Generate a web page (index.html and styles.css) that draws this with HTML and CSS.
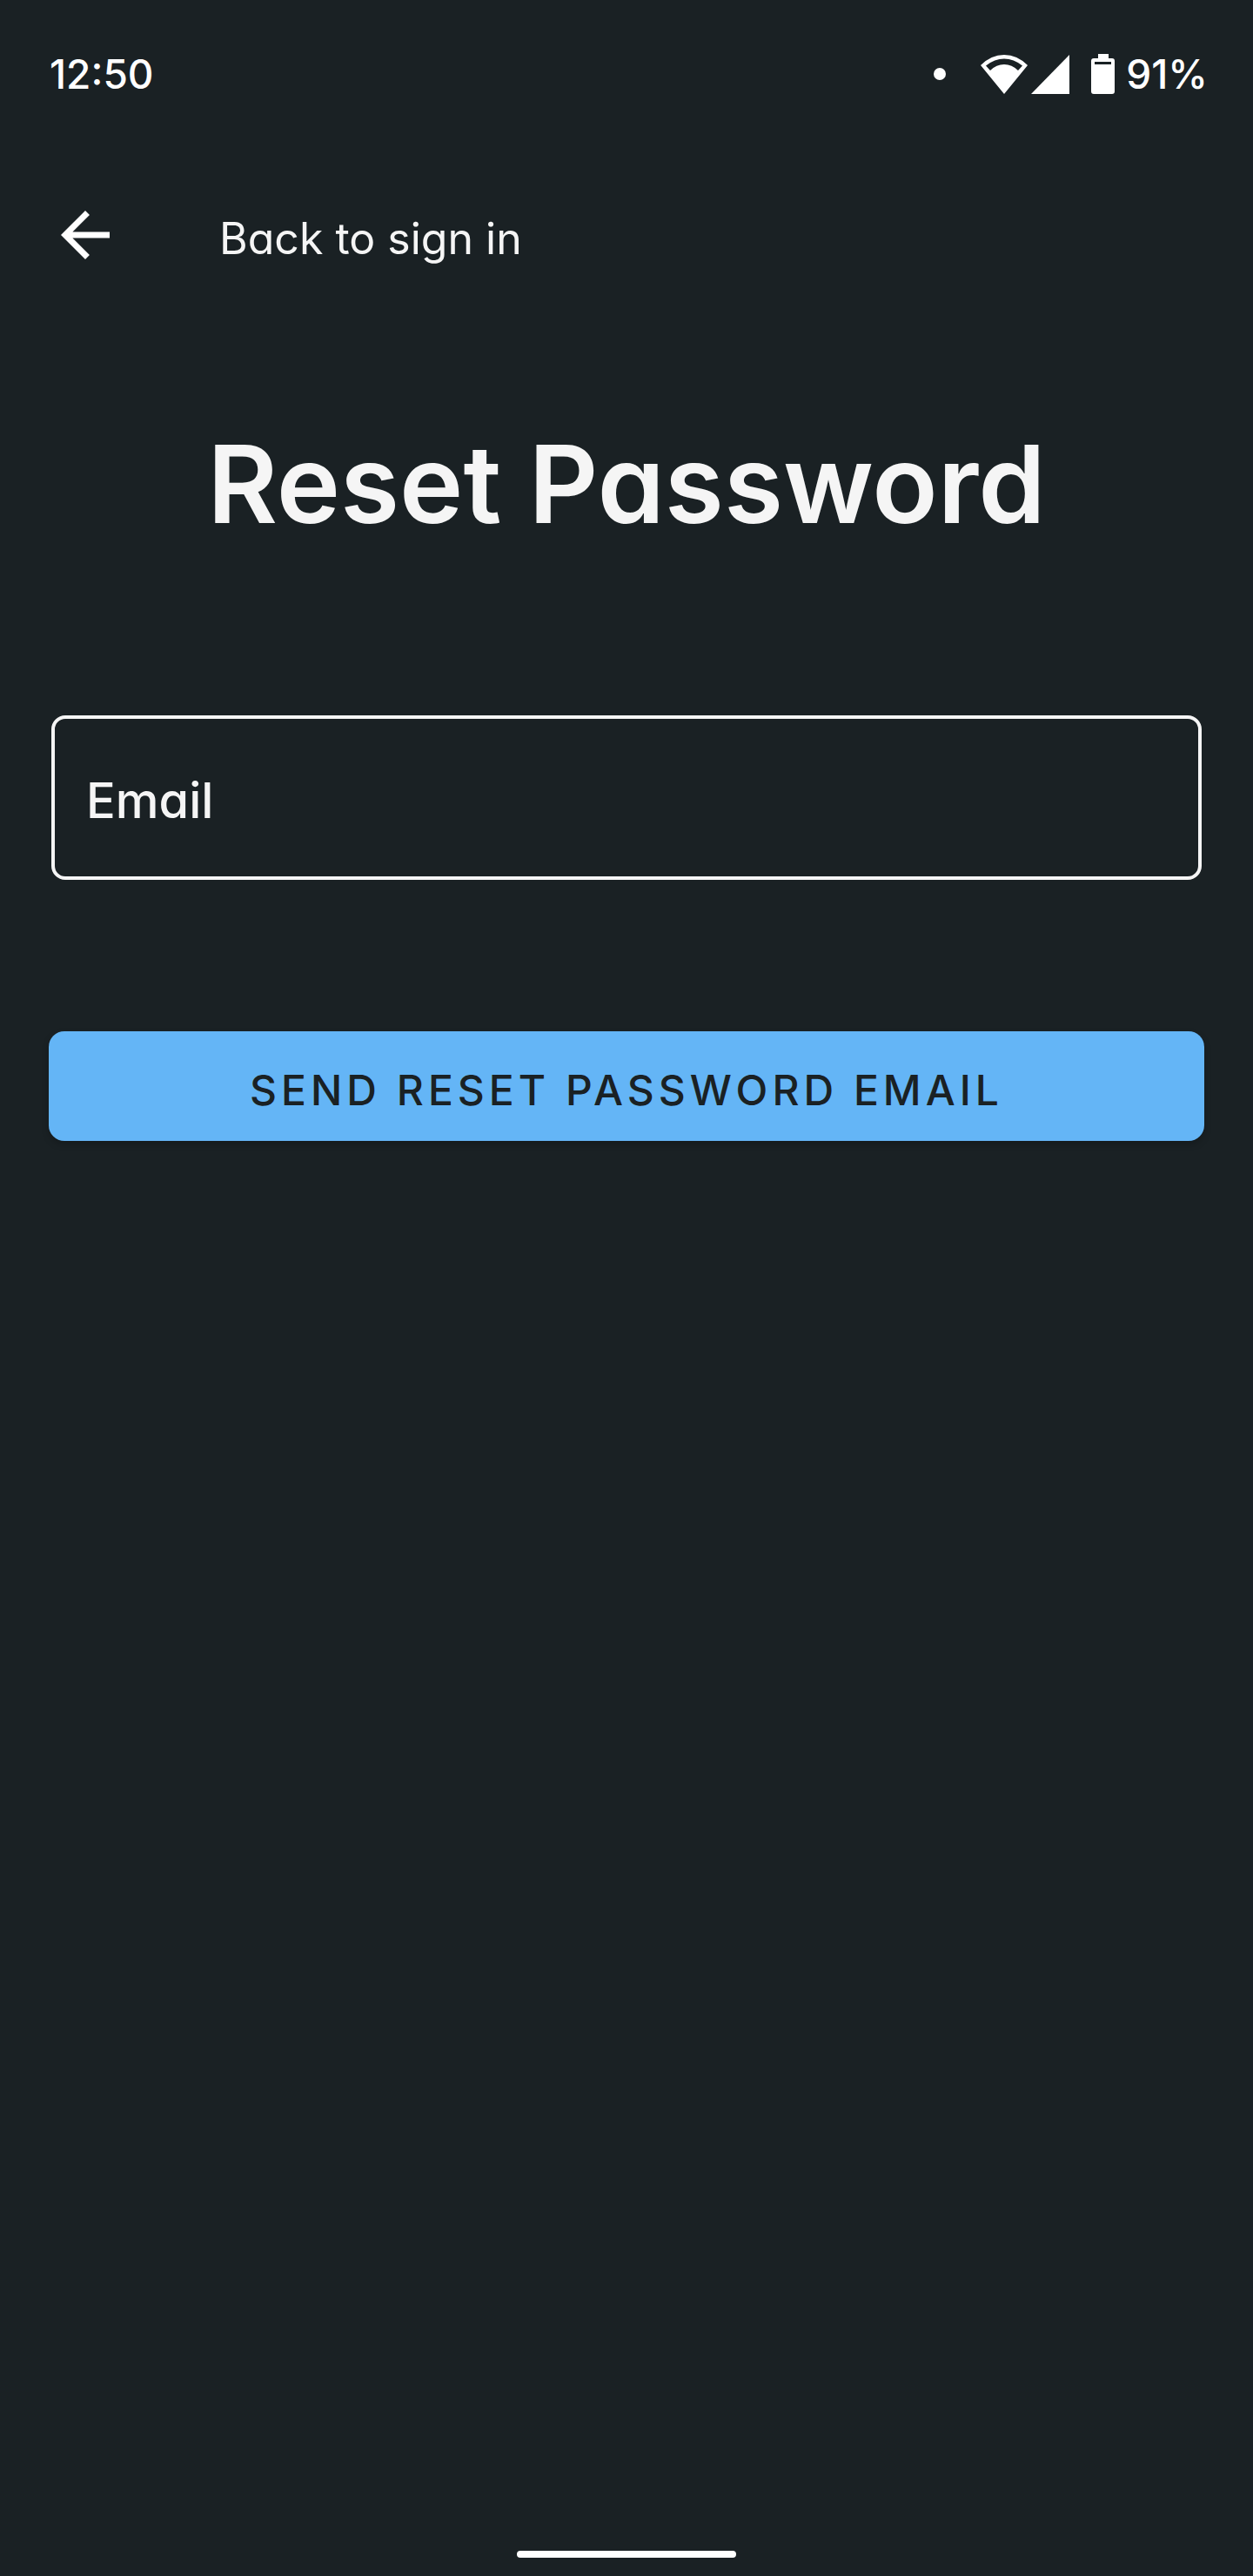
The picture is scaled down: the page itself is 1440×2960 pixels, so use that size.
FILE: index.html
```html
<!DOCTYPE html>
<html lang="en">
<head>
<meta charset="utf-8">
<meta name="viewport" content="width=device-width, initial-scale=1">
<title>Reset Password</title>
<link rel="stylesheet" href="styles.css">
</head>
<body>
<div class="status-bar">
  <span class="status-text">12:50</span>
  <div class="status-icons">
    <span class="status-dot"></span>
    <svg class="wifi" width="54" height="46" viewBox="0 0 54 46" aria-hidden="true">
      <path fill="#fff" fill-rule="evenodd" d="M0 13Q12 1 27 1T54 13L27 46ZM6 13.500L11 19Q18 12 27 12T43 19L48 13.500Q38 5.500 27 5.500T6 13.500Z"/>
    </svg>
    <svg class="signal" width="44" height="46" viewBox="0 0 44 46" aria-hidden="true">
      <path fill="#fff" d="M44 1V46H0Z"/>
    </svg>
    <svg class="battery" width="27" height="46" viewBox="0 0 27 46" aria-hidden="true">
      <path fill="#fff" fill-rule="evenodd" d="M8 0H20V5H24Q27 5 27 8V43Q27 46 24 46H3Q0 46 0 43V8Q0 5 3 5H8ZM4 9V12H23V9Z"/>
    </svg>
    <span class="status-text">91%</span>
  </div>
</div>
<header class="app-bar">
  <a class="back-link" href="#sign-in">
    <svg class="back-arrow" width="84" height="84" viewBox="0 0 24 24" aria-hidden="true">
      <path fill="#fff" d="M20 11H7.830l5.590-5.590L12 4l-8 8 8 8 1.410-1.410L7.830 13H20v-2z"/>
    </svg>
    <span>Back to sign in</span>
  </a>
</header>
<main class="content">
  <h1 class="title">Reset Password</h1>
  <form class="reset-form">
    <div class="field">
      <label class="field-label" for="email">Email</label>
      <input class="field-input" id="email" type="email" name="email">
    </div>
    <button class="submit" type="submit">SEND RESET PASSWORD EMAIL</button>
  </form>
</main>
<footer class="gesture-area"><span class="gesture-bar"></span></footer>
</body>
</html>
```

FILE: styles.css
```css
* {
  box-sizing: border-box;
}

body {
  margin: 0;
  min-height: 100vh;
  display: flex;
  flex-direction: column;
  background: #1a2124;
  color: #f5f5f5;
  font-family: Inter, "Open Sans", sans-serif;
  font-feature-settings: "cv11";
  font-size: 48px;
  font-weight: 500;
  line-height: 56px;
}

.status-bar {
  display: flex;
  align-items: center;
  justify-content: space-between;
  padding: 57px 52px 59px 57px;
  color: #fff;
}

.status-text {
  font-size: 46px;
}

.status-icons {
  display: flex;
  align-items: center;
}

.status-dot {
  width: 14px;
  height: 14px;
  border-radius: 50%;
  background: #fff;
}

.wifi {
  margin-left: 40px;
}

.signal {
  margin-left: 4px;
}

.battery {
  margin: 0 13px 0 25px;
}

.app-bar {
  display: flex;
  padding: 56px;
}

.back-link {
  display: flex;
  align-items: center;
  gap: 112px;
  color: inherit;
  font-size: 50px;
  font-weight: 400;
  text-decoration: none;
}

.back-arrow {
  margin-bottom: 8px;
}

.content {
  padding: 104px 56px 0;
}

.title {
  margin: 0;
  font-size: 124px;
  font-weight: 600;
  line-height: 152px;
  text-align: center;
}

.reset-form {
  display: flex;
  flex-direction: column;
  gap: 174px;
  margin-top: 190px;
}

.field {
  display: flex;
  align-items: center;
  gap: 24px;
  margin: 0 3px;
  padding: 62px 36px 55px;
  border: 4px solid #f5f5f5;
  border-radius: 16px;
  font-size: 56px;
  line-height: 64px;
}

.field-input {
  flex: 1;
  min-width: 0;
  height: 60px;
  padding: 0;
  border: 0;
  outline: 0;
  background: transparent;
  color: inherit;
  font: inherit;
}

.submit {
  padding: 40px 24px 30px;
  border: 0;
  border-radius: 18px;
  background: #64b5f6;
  box-shadow: 0 4px 8px rgba(0, 0, 0, 0.2);
  color: #1a2124;
  font: inherit;
  font-feature-settings: inherit;
  letter-spacing: 5px;
}

.gesture-area {
  display: flex;
  justify-content: center;
  margin-top: auto;
  padding: 24px 0 21px;
}

.gesture-bar {
  width: 252px;
  height: 8px;
  border-radius: 4px;
  background: #fff;
}
```
